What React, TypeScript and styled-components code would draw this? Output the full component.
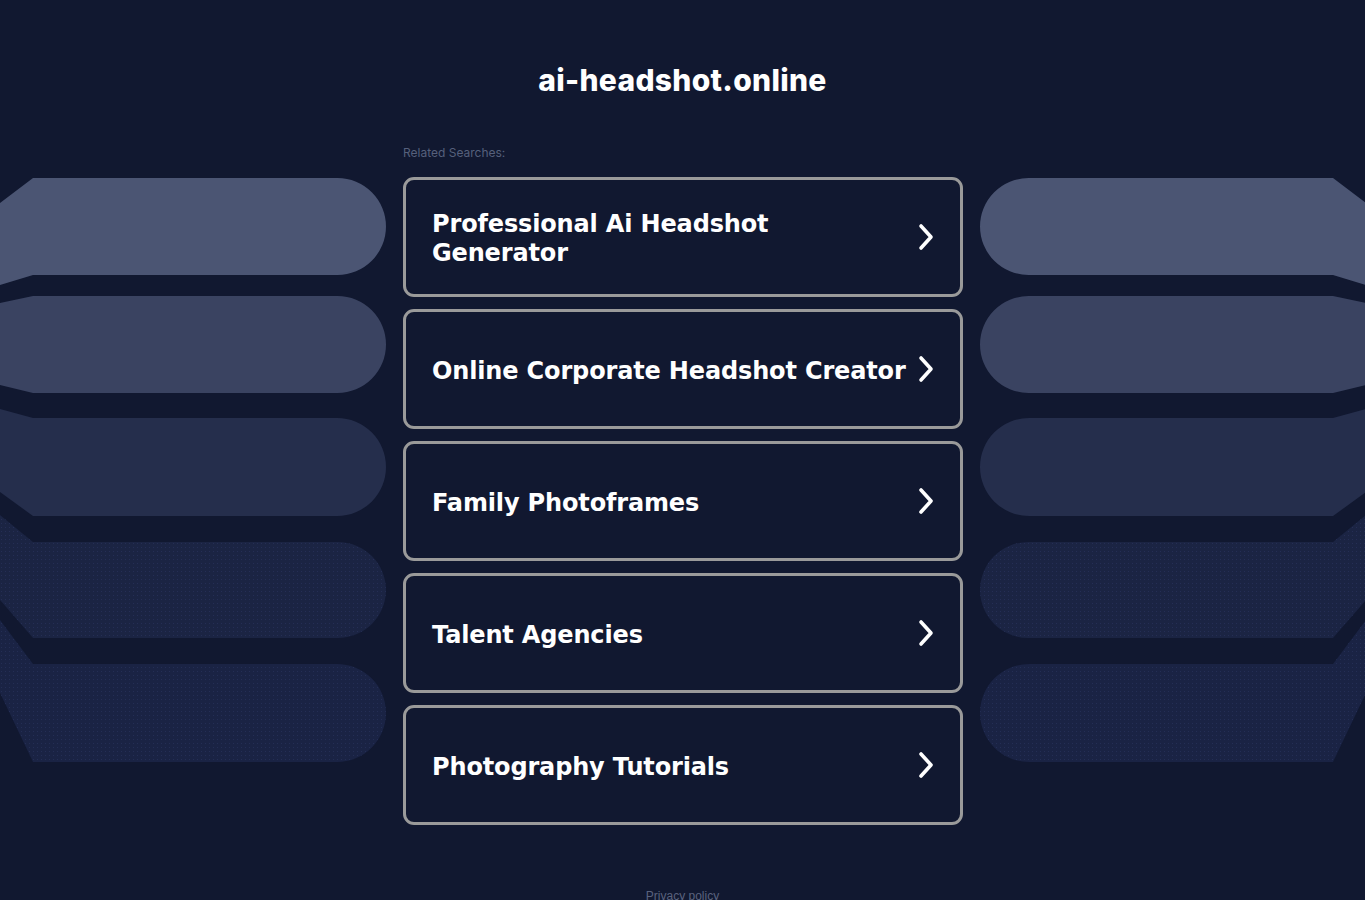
import React from 'react'
import styled, { createGlobalStyle } from 'styled-components'

const GlobalStyle = createGlobalStyle`
  html, body {
    margin: 0;
    padding: 0;
    background-color: #111830;
    overflow: hidden;
  }
`

const Page = styled.div`
  min-height: 100vh;
  background-color: #111830;
  font-family: Inter, 'Open Sans', sans-serif;
  color: #fff;
`

const Header = styled.header`
  padding-top: 62px;
  text-align: center;
`

const Domain = styled.h1`
  margin: 0;
  font-family: Inter, 'Noto Sans', sans-serif;
  font-size: 30px;
  line-height: 36px;
  font-weight: 800;
  letter-spacing: 0.3px;
  color: #fff;
`

const Main = styled.main`
  display: grid;
  grid-template-columns: 1fr 560px 1fr;
  column-gap: 17px;
  margin-top: 47px;
`

const Label = styled.div`
  grid-column: 2;
  font-family: Inter, 'Open Sans', sans-serif;
  font-size: 12px;
  line-height: 16px;
  color: #56607c;
  margin-bottom: 16px;
`

const Art = styled.svg<{ $flip?: boolean }>`
  grid-row: 2;
  grid-column: ${p => (p.$flip ? 3 : 1)};
  justify-self: ${p => (p.$flip ? 'end' : 'start')};
  margin-top: 1px;
  transform: ${p => (p.$flip ? 'scaleX(-1)' : 'none')};
`

const List = styled.div`
  grid-row: 2;
  grid-column: 2;
  display: flex;
  flex-direction: column;
  gap: 12px;
`

const Card = styled.a`
  box-sizing: border-box;
  display: flex;
  align-items: center;
  justify-content: space-between;
  height: 120px;
  padding: 0 24px 0 26px;
  border: 3px solid #9a9a9a;
  border-radius: 11px;
  background-color: #111830;
  color: #fff;
  text-decoration: none;
  cursor: pointer;
`

const CardText = styled.span`
  font-family: 'DejaVu Sans', Verdana, sans-serif;
  font-weight: 700;
  font-size: 24px;
  line-height: 29px;
  letter-spacing: -0.15px;
  max-width: 476px;
  padding-top: 4px;
`

const Footer = styled.footer`
  margin-top: 63px;
  text-align: center;
  font-family: 'Liberation Sans', Arial, sans-serif;
  font-size: 12px;
  line-height: 16px;
  color: #5a627e;
`

const bands = [
  { y: 0, h: 97, l1: 25, l2: 107, fill: '#4b5573' },
  { y: 118, h: 97, l1: 125, l2: 207, fill: '#3a4361' },
  { y: 240, h: 98, l1: 231, l2: 314, fill: '#252e4c' },
  { y: 364, h: 96, l1: 337, l2: 422, fill: '#1b2443', dots: true },
  { y: 486, h: 98, l1: 442, l2: 515, fill: '#1a2344', dots: true },
]

function bandPath(b: typeof bands[number]) {
  const r = b.h / 2
  const end = 386 - r
  return `M0,${b.l1} L33,${b.y} L${end},${b.y} A${r},${r} 0 0 1 ${end},${b.y + b.h} L33,${b.y + b.h} L0,${b.l2} Z`
}

function Bands({ flip }: { flip?: boolean }) {
  const id = flip ? 'dots-r' : 'dots-l'
  return (
    <Art $flip={flip} width="386" height="585" viewBox="0 0 386 585" aria-hidden="true">
      <defs>
        <pattern id={id} width="4" height="4" patternUnits="userSpaceOnUse">
          <rect x="1" y="1" width="1" height="1" fill="#2b3660" opacity="0.6" />
        </pattern>
      </defs>
      {bands.map((b, i) => (
        <g key={i}>
          <path d={bandPath(b)} fill={b.fill} />
          {b.dots && <path d={bandPath(b)} fill={`url(#${id})`} />}
        </g>
      ))}
    </Art>
  )
}

function Chevron() {
  return (
    <svg width="20" height="30" viewBox="0 0 20 30" aria-hidden="true">
      <path d="M5 4 L15 15 L5 26" fill="none" stroke="#fff" strokeWidth="3.6" strokeLinecap="round" strokeLinejoin="round" />
    </svg>
  )
}

const searches = [
  'Professional Ai Headshot Generator',
  'Online Corporate Headshot Creator',
  'Family Photoframes',
  'Talent Agencies',
  'Photography Tutorials',
]

export default function App() {
  return (
    <Page>
      <GlobalStyle />
      <Header>
        <Domain>ai-headshot.online</Domain>
      </Header>
      <Main>
        <Label>Related Searches:</Label>
        <Bands />
        <List>
          {searches.map(s => (
            <Card key={s}>
              <CardText>{s}</CardText>
              <Chevron />
            </Card>
          ))}
        </List>
        <Bands flip />
      </Main>
      <Footer>Privacy policy</Footer>
    </Page>
  )
}
